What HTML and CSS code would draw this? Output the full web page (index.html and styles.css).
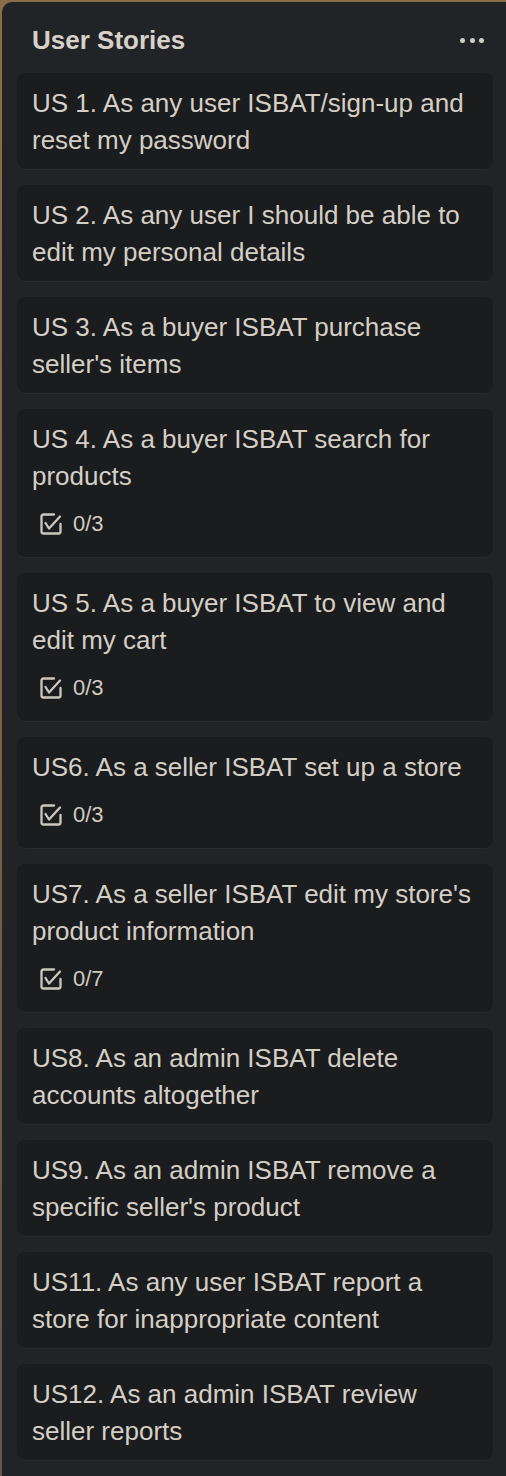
FILE: index.html
```html
<!DOCTYPE html>
<html lang="en">
<head>
<meta charset="utf-8">
<title>User Stories</title>
<link rel="stylesheet" href="styles.css">
</head>
<body>
<div class="list">
  <div class="list-header">
    <h2 class="list-title">User Stories</h2>
    <div class="menu"><span></span><span></span><span></span></div>
  </div>
  <div class="cards">
    <div class="card"><div class="card-title">US 1. As any user ISBAT/sign-up and reset my password</div></div>
    <div class="card"><div class="card-title">US 2. As any user I should be able to edit my personal details</div></div>
    <div class="card"><div class="card-title">US 3. As a buyer ISBAT purchase seller's items</div></div>
    <div class="card">
      <div class="card-title">US 4. As a buyer ISBAT search for products</div>
      <div class="badges"><div class="badge"><svg class="check" viewBox="0 0 24 24"><path d="M15 2.5H4.5a2 2 0 0 0-2 2v15a2 2 0 0 0 2 2h15a2 2 0 0 0 2-2V12"/><path d="M6.5 11l3.5 5.5L21 4.5"/></svg><span>0/3</span></div></div>
    </div>
    <div class="card">
      <div class="card-title">US 5. As a buyer ISBAT to view and edit my cart</div>
      <div class="badges"><div class="badge"><svg class="check" viewBox="0 0 24 24"><path d="M15 2.5H4.5a2 2 0 0 0-2 2v15a2 2 0 0 0 2 2h15a2 2 0 0 0 2-2V12"/><path d="M6.5 11l3.5 5.5L21 4.5"/></svg><span>0/3</span></div></div>
    </div>
    <div class="card">
      <div class="card-title">US6. As a seller ISBAT set up a store</div>
      <div class="badges"><div class="badge"><svg class="check" viewBox="0 0 24 24"><path d="M15 2.5H4.5a2 2 0 0 0-2 2v15a2 2 0 0 0 2 2h15a2 2 0 0 0 2-2V12"/><path d="M6.5 11l3.5 5.5L21 4.5"/></svg><span>0/3</span></div></div>
    </div>
    <div class="card">
      <div class="card-title">US7. As a seller ISBAT edit my store's product information</div>
      <div class="badges"><div class="badge"><svg class="check" viewBox="0 0 24 24"><path d="M15 2.5H4.5a2 2 0 0 0-2 2v15a2 2 0 0 0 2 2h15a2 2 0 0 0 2-2V12"/><path d="M6.5 11l3.5 5.5L21 4.5"/></svg><span>0/7</span></div></div>
    </div>
    <div class="card"><div class="card-title">US8. As an admin ISBAT delete accounts altogether</div></div>
    <div class="card"><div class="card-title">US9. As an admin ISBAT remove a specific seller's product</div></div>
    <div class="card"><div class="card-title">US11. As any user ISBAT report a store for inappropriate content</div></div>
    <div class="card"><div class="card-title">US12. As an admin ISBAT review seller reports</div></div>
  </div>
</div>
</body>
</html>
```
FILE: styles.css
```css
html, body {
  margin: 0;
  padding: 0;
}
body {
  width: 506px;
  height: 1476px;
  overflow: hidden;
  background: linear-gradient(180deg, #8b6c46 0%, #7e6442 45%, #6f5c43 70%, #5f584c 100%);
  font-family: "Liberation Sans", Arial, sans-serif;
  color: #d4cfc6;
}
.list {
  margin: 2px 0 0 2px;
  width: 506px;
  box-sizing: border-box;
  min-height: 1474px;
  padding: 0 15px 16px;
  background: #222326;
  border-top-left-radius: 10px;
}
.list-header {
  display: flex;
  align-items: center;
  justify-content: space-between;
  padding: 20px 9px 14px 15px;
}
.list-title {
  margin: 0;
  font-size: 26px;
  line-height: 37px;
  font-weight: 700;
  color: #d6d1c9;
}
.menu {
  display: flex;
  gap: 4.5px;
  align-items: center;
}
.menu span {
  width: 5px;
  height: 5px;
  border-radius: 50%;
  background: #d3cec6;
}
.cards {
  display: flex;
  flex-direction: column;
  gap: 16px;
}
.card {
  background: #1b1c1e;
  border-radius: 8px;
  padding: 12px 15px 10px;
  box-shadow: 0 1px 0 #262a33;
}
.card-title {
  font-size: 26px;
  line-height: 37px;
}
.badges {
  margin-top: 10px;
  padding-bottom: 5px;
  display: flex;
}
.badge {
  display: flex;
  align-items: center;
  gap: 10px;
  padding-left: 7px;
  height: 37px;
  font-size: 22px;
  line-height: 37px;
  color: #d0cbc3;
}
.check {
  width: 24px;
  height: 24px;
  fill: none;
  stroke: #cdc8bf;
  stroke-width: 2.3;
  stroke-linecap: round;
  stroke-linejoin: round;
}
```
